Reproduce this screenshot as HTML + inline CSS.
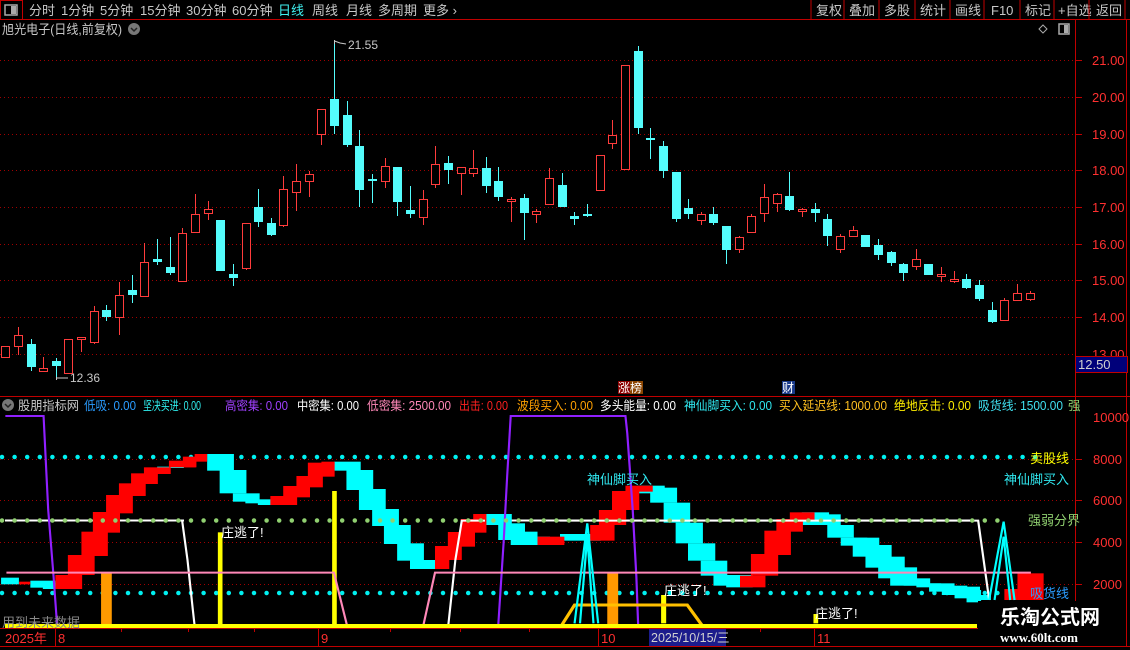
<!DOCTYPE html>
<html><head><meta charset="utf-8"><style>
html,body{margin:0;padding:0;background:#000;}
svg{display:block;font-family:"Liberation Sans","Noto Sans CJK SC",sans-serif;}
</style></head><body>
<svg width="1130" height="650" viewBox="0 0 1130 650" xmlns="http://www.w3.org/2000/svg">
<rect width="1130" height="650" fill="#000"/>
<g font-size="13" fill="#c8c8c8">
<rect x="0.5" y="0.5" width="22" height="19" fill="none" stroke="#c00000"/>
<rect x="5" y="5" width="12" height="10" fill="none" stroke="#aaa" stroke-width="1.5"/><rect x="11" y="6" width="5" height="8" fill="#aaa"/>
<text x="29" y="15">分时</text><text x="61" y="15">1分钟</text><text x="100" y="15">5分钟</text><text x="140" y="15">15分钟</text><text x="186" y="15">30分钟</text><text x="232" y="15">60分钟</text>
<text x="278" y="15" fill="#40f0f0">日线</text><text x="312" y="15">周线</text><text x="346" y="15">月线</text><text x="378" y="15">多周期</text><text x="423" y="15">更多 ›</text>
<text x="816" y="15">复权</text><text x="849" y="15">叠加</text><text x="884" y="15">多股</text><text x="920" y="15">统计</text><text x="955" y="15">画线</text><text x="991" y="15">F10</text><text x="1025" y="15">标记</text><text x="1058" y="15">+自选</text><text x="1096" y="15">返回</text>
</g>
<g stroke="#c00000" stroke-width="1">
<line x1="811" y1="0" x2="811" y2="19"/><line x1="844" y1="0" x2="844" y2="19"/><line x1="879" y1="0" x2="879" y2="19"/><line x1="915" y1="0" x2="915" y2="19"/><line x1="950" y1="0" x2="950" y2="19"/><line x1="984" y1="0" x2="984" y2="19"/><line x1="1020" y1="0" x2="1020" y2="19"/><line x1="1054" y1="0" x2="1054" y2="19"/><line x1="1089" y1="0" x2="1089" y2="19"/><line x1="1125" y1="0" x2="1125" y2="19"/>
<line x1="0" y1="19.5" x2="1130" y2="19.5"/>
<line x1="1075.5" y1="20" x2="1075.5" y2="646"/>
<line x1="1126.5" y1="20" x2="1126.5" y2="646"/>
<line x1="0" y1="396.5" x2="1130" y2="396.5"/>
<line x1="0" y1="628.5" x2="1075" y2="628.5"/>
<line x1="0" y1="646.5" x2="1130" y2="646.5"/>
</g>
<text x="2" y="34" font-size="13" fill="#c8c8c8" textLength="120" lengthAdjust="spacingAndGlyphs">旭光电子(日线,前复权)</text>
<circle cx="134" cy="29" r="6" fill="#777"/><path d="M131 28 L134 31 L137 28" stroke="#222" stroke-width="1.5" fill="none"/>
<path d="M1043 25 L1047 29 L1043 33 L1039 29 Z" fill="none" stroke="#aaa"/>
<rect x="1059" y="24" width="10" height="10" fill="none" stroke="#aaa" stroke-width="1.5"/><rect x="1064" y="25" width="4" height="8" fill="#aaa"/>
<g stroke="#a00000" stroke-width="1" stroke-dasharray="1 3">
<line x1="0" y1="60.5" x2="1075" y2="60.5"/><line x1="0" y1="97.5" x2="1075" y2="97.5"/><line x1="0" y1="134.5" x2="1075" y2="134.5"/><line x1="0" y1="170.5" x2="1075" y2="170.5"/><line x1="0" y1="207.5" x2="1075" y2="207.5"/><line x1="0" y1="244.5" x2="1075" y2="244.5"/><line x1="0" y1="280.5" x2="1075" y2="280.5"/><line x1="0" y1="317.5" x2="1075" y2="317.5"/><line x1="0" y1="354.5" x2="1075" y2="354.5"/>
<line x1="0" y1="459.5" x2="1075" y2="459.5"/><line x1="0" y1="500.5" x2="1075" y2="500.5"/><line x1="0" y1="542.5" x2="1075" y2="542.5"/><line x1="0" y1="584.5" x2="1075" y2="584.5"/>
</g>
<g font-size="13" fill="#ff3030">
<text x="1092" y="65">21.00</text><text x="1092" y="102">20.00</text><text x="1092" y="139">19.00</text><text x="1092" y="175">18.00</text><text x="1092" y="212">17.00</text><text x="1092" y="249">16.00</text><text x="1092" y="285">15.00</text><text x="1092" y="322">14.00</text><text x="1092" y="359">13.00</text>
<text x="1093" y="422">10000</text><text x="1093" y="464">8000</text><text x="1093" y="505">6000</text><text x="1093" y="547">4000</text><text x="1093" y="589">2000</text>
</g>
<g stroke="#c00000"><line x1="1076" y1="60.5" x2="1082" y2="60.5"/><line x1="1076" y1="97.5" x2="1082" y2="97.5"/><line x1="1076" y1="134.5" x2="1082" y2="134.5"/><line x1="1076" y1="170.5" x2="1082" y2="170.5"/><line x1="1076" y1="207.5" x2="1082" y2="207.5"/><line x1="1076" y1="244.5" x2="1082" y2="244.5"/><line x1="1076" y1="280.5" x2="1082" y2="280.5"/><line x1="1076" y1="317.5" x2="1082" y2="317.5"/><line x1="1076" y1="459.5" x2="1082" y2="459.5"/><line x1="1076" y1="500.5" x2="1082" y2="500.5"/><line x1="1076" y1="542.5" x2="1082" y2="542.5"/><line x1="1076" y1="584.5" x2="1082" y2="584.5"/></g>
<rect x="1075.5" y="356.5" width="52" height="16" fill="#00007a" stroke="#c00000"/>
<text x="1078" y="369" font-size="13" fill="#d0d0d0">12.50</text>
<g stroke-width="1">
<g stroke="#ff3c3c" fill="#000">
<line x1="18.5" y1="327" x2="18.5" y2="355"/><line x1="43.5" y1="357" x2="43.5" y2="371"/><line x1="81.5" y1="337" x2="81.5" y2="352"/><line x1="94.5" y1="306" x2="94.5" y2="344"/><line x1="119.5" y1="282" x2="119.5" y2="335"/><line x1="144.5" y1="243" x2="144.5" y2="297"/><line x1="182.5" y1="228" x2="182.5" y2="281"/><line x1="195.5" y1="194" x2="195.5" y2="233"/><line x1="208.5" y1="201" x2="208.5" y2="220"/><line x1="246.5" y1="223" x2="246.5" y2="270"/><line x1="283.5" y1="176" x2="283.5" y2="227"/><line x1="296.5" y1="164" x2="296.5" y2="211"/><line x1="309.5" y1="171" x2="309.5" y2="197"/><line x1="321.5" y1="109" x2="321.5" y2="145"/><line x1="385.5" y1="158" x2="385.5" y2="188"/><line x1="423.5" y1="190" x2="423.5" y2="225"/><line x1="435.5" y1="146" x2="435.5" y2="188"/><line x1="461.5" y1="167" x2="461.5" y2="195"/><line x1="473.5" y1="150" x2="473.5" y2="177"/><line x1="511.5" y1="197" x2="511.5" y2="222"/><line x1="536.5" y1="209" x2="536.5" y2="223"/><line x1="549.5" y1="168" x2="549.5" y2="204"/><line x1="612.5" y1="120" x2="612.5" y2="149"/><line x1="701.5" y1="212" x2="701.5" y2="225"/><line x1="739.5" y1="236" x2="739.5" y2="253"/><line x1="751.5" y1="214" x2="751.5" y2="233"/><line x1="764.5" y1="184" x2="764.5" y2="222"/><line x1="777.5" y1="193" x2="777.5" y2="212"/><line x1="802.5" y1="208" x2="802.5" y2="217"/><line x1="840.5" y1="234" x2="840.5" y2="253"/><line x1="853.5" y1="226" x2="853.5" y2="236"/><line x1="916.5" y1="249" x2="916.5" y2="270"/><line x1="941.5" y1="267" x2="941.5" y2="282"/><line x1="954.5" y1="271" x2="954.5" y2="283"/><line x1="1004.5" y1="298" x2="1004.5" y2="320"/><line x1="1017.5" y1="284" x2="1017.5" y2="300"/><line x1="1030.5" y1="291" x2="1030.5" y2="301"/>
<rect x="1.5" y="346.5" width="8" height="11"/><rect x="14.5" y="335.5" width="8" height="11"/><rect x="39.5" y="368.5" width="8" height="3"/><rect x="64.5" y="339.5" width="8" height="34"/><rect x="77.5" y="337.5" width="8" height="2"/><rect x="90.5" y="311.5" width="8" height="31"/><rect x="115.5" y="295.5" width="8" height="22"/><rect x="140.5" y="262.5" width="8" height="34"/><rect x="178.5" y="233.5" width="8" height="48"/><rect x="191.5" y="214.5" width="8" height="18"/><rect x="204.5" y="209.5" width="8" height="4"/><rect x="242.5" y="223.5" width="8" height="45"/><rect x="279.5" y="189.5" width="8" height="36"/><rect x="292.5" y="181.5" width="8" height="11"/><rect x="305.5" y="174.5" width="8" height="7"/><rect x="317.5" y="109.5" width="8" height="25"/><rect x="381.5" y="166.5" width="8" height="15"/><rect x="419.5" y="199.5" width="8" height="18"/><rect x="431.5" y="164.5" width="8" height="20"/><rect x="457.5" y="167.5" width="8" height="6"/><rect x="469.5" y="168.5" width="8" height="5"/><rect x="507.5" y="199.5" width="8" height="2"/><rect x="532.5" y="211.5" width="8" height="3"/><rect x="545.5" y="178.5" width="8" height="26"/><rect x="596.5" y="155.5" width="8" height="35"/><rect x="608.5" y="135.5" width="8" height="8"/><rect x="621.5" y="65.5" width="8" height="104"/><rect x="697.5" y="214.5" width="8" height="6"/><rect x="735.5" y="237.5" width="8" height="12"/><rect x="747.5" y="216.5" width="8" height="16"/><rect x="760.5" y="197.5" width="8" height="16"/><rect x="773.5" y="194.5" width="8" height="9"/><rect x="798.5" y="209.5" width="8" height="2"/><rect x="836.5" y="236.5" width="8" height="13"/><rect x="849.5" y="230.5" width="8" height="6"/><rect x="912.5" y="259.5" width="8" height="7"/><rect x="937.5" y="274.5" width="8" height="2"/><rect x="950.5" y="279.5" width="8" height="2"/><rect x="1000.5" y="300.5" width="8" height="20"/><rect x="1013.5" y="293.5" width="8" height="7"/><rect x="1026.5" y="293.5" width="8" height="6"/>
</g>
<g stroke="#54fcfc" fill="#54fcfc">
<line x1="31.5" y1="339" x2="31.5" y2="371"/><line x1="56.5" y1="358" x2="56.5" y2="377"/><line x1="106.5" y1="305" x2="106.5" y2="321"/><line x1="132.5" y1="275" x2="132.5" y2="303"/><line x1="157.5" y1="239" x2="157.5" y2="265"/><line x1="170.5" y1="237" x2="170.5" y2="275"/><line x1="233.5" y1="264" x2="233.5" y2="286"/><line x1="258.5" y1="189" x2="258.5" y2="227"/><line x1="271.5" y1="218" x2="271.5" y2="236"/><line x1="334.5" y1="40" x2="334.5" y2="134"/><line x1="347.5" y1="101" x2="347.5" y2="147"/><line x1="359.5" y1="130" x2="359.5" y2="207"/><line x1="372.5" y1="174" x2="372.5" y2="203"/><line x1="397.5" y1="167" x2="397.5" y2="216"/><line x1="410.5" y1="186" x2="410.5" y2="218"/><line x1="448.5" y1="156" x2="448.5" y2="184"/><line x1="486.5" y1="157" x2="486.5" y2="193"/><line x1="498.5" y1="167" x2="498.5" y2="201"/><line x1="524.5" y1="194" x2="524.5" y2="240"/><line x1="562.5" y1="173" x2="562.5" y2="207"/><line x1="574.5" y1="212" x2="574.5" y2="225"/><line x1="587.5" y1="204" x2="587.5" y2="217"/><line x1="638.5" y1="46" x2="638.5" y2="134"/><line x1="650.5" y1="128" x2="650.5" y2="159"/><line x1="663.5" y1="141" x2="663.5" y2="178"/><line x1="676.5" y1="172" x2="676.5" y2="222"/><line x1="688.5" y1="199" x2="688.5" y2="219"/><line x1="713.5" y1="207" x2="713.5" y2="225"/><line x1="726.5" y1="226" x2="726.5" y2="264"/><line x1="789.5" y1="172" x2="789.5" y2="211"/><line x1="815.5" y1="203" x2="815.5" y2="222"/><line x1="827.5" y1="214" x2="827.5" y2="246"/><line x1="878.5" y1="239" x2="878.5" y2="260"/><line x1="891.5" y1="251" x2="891.5" y2="266"/><line x1="903.5" y1="263" x2="903.5" y2="281"/><line x1="966.5" y1="274" x2="966.5" y2="289"/><line x1="979.5" y1="280" x2="979.5" y2="301"/><line x1="992.5" y1="302" x2="992.5" y2="323"/>
</g>
<g fill="#54fcfc">
<rect x="27" y="344" width="9" height="23"/><rect x="52" y="361" width="9" height="5"/><rect x="102" y="310" width="9" height="7"/><rect x="128" y="290" width="9" height="5"/><rect x="153" y="259" width="9" height="3"/><rect x="166" y="267" width="9" height="6"/><rect x="216" y="220" width="9" height="51"/><rect x="229" y="274" width="9" height="4"/><rect x="254" y="207" width="9" height="15"/><rect x="267" y="223" width="9" height="12"/><rect x="330" y="99" width="9" height="27"/><rect x="343" y="115" width="9" height="30"/><rect x="355" y="146" width="9" height="44"/><rect x="368" y="179" width="9" height="2"/><rect x="393" y="167" width="9" height="35"/><rect x="406" y="210" width="9" height="4"/><rect x="444" y="163" width="9" height="7"/><rect x="482" y="168" width="9" height="18"/><rect x="494" y="181" width="9" height="16"/><rect x="520" y="198" width="9" height="15"/><rect x="558" y="185" width="9" height="22"/><rect x="570" y="216" width="9" height="3"/><rect x="583" y="214" width="9" height="2"/><rect x="634" y="51" width="9" height="77"/><rect x="646" y="138" width="9" height="2"/><rect x="659" y="146" width="9" height="25"/><rect x="672" y="172" width="9" height="47"/><rect x="684" y="208" width="9" height="6"/><rect x="709" y="214" width="9" height="9"/><rect x="722" y="226" width="9" height="24"/><rect x="785" y="196" width="9" height="14"/><rect x="811" y="209" width="9" height="4"/><rect x="823" y="219" width="9" height="17"/><rect x="861" y="235" width="9" height="12"/><rect x="874" y="245" width="9" height="10"/><rect x="887" y="252" width="9" height="11"/><rect x="899" y="264" width="9" height="9"/><rect x="924" y="264" width="9" height="11"/><rect x="962" y="279" width="9" height="9"/><rect x="975" y="285" width="9" height="14"/><rect x="988" y="310" width="9" height="12"/>
</g>
</g>
<g stroke="#c8c8c8" fill="none"><path d="M334.5 40 L334.5 44 M334.5 41 L340 43 L346 44"/><path d="M56.5 377 L56.5 380 M56.5 378 L68 378"/></g>
<text x="348" y="49" font-size="12" fill="#c8c8c8">21.55</text>
<text x="70" y="382" font-size="12" fill="#c8c8c8">12.36</text>
<rect x="618" y="381" width="12" height="13" fill="#8b0000"/><rect x="630" y="381" width="13" height="13" fill="#8b4500"/>
<text x="618" y="392" font-size="12" fill="#fff">涨榜</text>
<rect x="782" y="381" width="13" height="13" fill="#1a3a8a"/><text x="782" y="392" font-size="12" fill="#fff">财</text>
<circle cx="8" cy="405" r="6" fill="#777"/><path d="M5 404 L8 407 L11 404" stroke="#222" stroke-width="1.5" fill="none"/>
<g font-size="12.5">
<text x="18" y="410" fill="#c8c8c8" textLength="61" lengthAdjust="spacingAndGlyphs">股朋指标网</text>
<text x="84" y="410" fill="#2a9cff" textLength="52" lengthAdjust="spacingAndGlyphs">低吸: 0.00</text>
<text x="143" y="410" fill="#30f0f0" textLength="58" lengthAdjust="spacingAndGlyphs">坚决买进: 0.00</text>
<text x="225" y="410" fill="#a040ff" textLength="63" lengthAdjust="spacingAndGlyphs">高密集: 0.00</text>
<text x="297" y="410" fill="#ffffff" textLength="62" lengthAdjust="spacingAndGlyphs">中密集: 0.00</text>
<text x="367" y="410" fill="#ff88b8" textLength="84" lengthAdjust="spacingAndGlyphs">低密集: 2500.00</text>
<text x="459" y="410" fill="#ff2020" textLength="49" lengthAdjust="spacingAndGlyphs">出击: 0.00</text>
<text x="517" y="410" fill="#ffa000" textLength="76" lengthAdjust="spacingAndGlyphs">波段买入: 0.00</text>
<text x="600" y="410" fill="#ffffff" textLength="76" lengthAdjust="spacingAndGlyphs">多头能量: 0.00</text>
<text x="684" y="410" fill="#30e8f0" textLength="88" lengthAdjust="spacingAndGlyphs">神仙脚买入: 0.00</text>
<text x="779" y="410" fill="#ffc020" textLength="108" lengthAdjust="spacingAndGlyphs">买入延迟线: 1000.00</text>
<text x="894" y="410" fill="#ffee00" textLength="77" lengthAdjust="spacingAndGlyphs">绝地反击: 0.00</text>
<text x="978" y="410" fill="#40e0f0" textLength="85" lengthAdjust="spacingAndGlyphs">吸货线: 1500.00</text>
<text x="1068" y="410" fill="#90d070">强</text>
</g>
<line x1="2" y1="457" x2="1040" y2="457" stroke="#00f0f0" stroke-width="4.5" stroke-linecap="round" stroke-dasharray="0 12.6"/>
<line x1="2" y1="593" x2="1040" y2="593" stroke="#00f0f0" stroke-width="4.5" stroke-linecap="round" stroke-dasharray="0 12.6"/>
<line x1="5" y1="520.5" x2="184" y2="520.5" stroke="#fff" stroke-width="2"/>
<line x1="462" y1="520.5" x2="971" y2="520.5" stroke="#fff" stroke-width="2"/>
<g transform="translate(0,410) scale(0.35714,0.33333)">
<g fill="#00ffff">
<rect x="3" y="503" width="50" height="20"/><rect x="85" y="512" width="70" height="21"/><rect x="120" y="518" width="75" height="19"/><rect x="440" y="170" width="75" height="4"/><rect x="580" y="132" width="75" height="50"/><rect x="615" y="180" width="75" height="70"/><rect x="652" y="250" width="75" height="25"/><rect x="687" y="268" width="73" height="12"/><rect x="722" y="270" width="75" height="15"/><rect x="935" y="155" width="75" height="27"/><rect x="970" y="180" width="75" height="60"/><rect x="1005" y="237" width="75" height="63"/><rect x="1042" y="297" width="75" height="51"/><rect x="1075" y="345" width="75" height="57"/><rect x="1112" y="400" width="75" height="52"/><rect x="1148" y="450" width="75" height="27"/><rect x="1358" y="312" width="75" height="33"/><rect x="1395" y="340" width="75" height="50"/><rect x="1430" y="365" width="75" height="40"/><rect x="1465" y="380" width="75" height="25"/>
</g>
<g fill="#ff0000">
<rect x="53" y="515" width="32" height="8"/><rect x="155" y="495" width="75" height="42"/><rect x="190" y="435" width="75" height="60"/><rect x="228" y="365" width="74" height="73"/><rect x="260" y="306" width="76" height="62"/><rect x="297" y="255" width="75" height="55"/><rect x="333" y="220" width="75" height="38"/><rect x="367" y="190" width="75" height="32"/><rect x="403" y="172" width="75" height="20"/><rect x="473" y="152" width="75" height="20"/><rect x="512" y="140" width="38" height="32"/><rect x="545" y="132" width="35" height="23"/><rect x="757" y="258" width="75" height="27"/><rect x="793" y="228" width="75" height="34"/><rect x="830" y="198" width="74" height="34"/><rect x="862" y="158" width="75" height="42"/><rect x="900" y="155" width="37" height="5"/><rect x="1218" y="408" width="40" height="69"/><rect x="1254" y="366" width="39" height="84"/><rect x="1290" y="327" width="40" height="83"/><rect x="1325" y="312" width="37" height="56"/><rect x="1505" y="380" width="63" height="25"/>
</g>
<rect x="283" y="490" width="30" height="158" fill="#ff9900"/>
<rect x="610" y="367" width="13" height="275" fill="#ffff00"/>
<rect x="930" y="243" width="13" height="399" fill="#ffff00"/>
<g fill="none" stroke-width="6">
<path d="M15 18 L122 18 L135 300 L150 500 L160 648" stroke="#9020ff"/>
<path d="M1395 648 L1410 400 L1420 200 L1430 18 L1568 18" stroke="#9020ff"/>
<path d="M510 332 L525 450 L540 600 L545 648" stroke="#fff"/>
<path d="M1255 648 L1275 450 L1293 332 L1358 332" stroke="#fff"/>
<path d="M18 488 L935 488 L972 648" stroke="#ff88b8"/>
<path d="M1185 648 L1218 488 L1568 488" stroke="#ff88b8"/>
</g>
</g>
<g transform="translate(560,410) scale(0.363636,0.33333)">
<g fill="#00ffff">
<rect x="0" y="372" width="112" height="20"/><rect x="213" y="227" width="75" height="23"/><rect x="248" y="233" width="74" height="45"/><rect x="285" y="278" width="73" height="60"/><rect x="318" y="338" width="75" height="62"/><rect x="352" y="400" width="75" height="52"/><rect x="387" y="452" width="73" height="45"/><rect x="422" y="495" width="73" height="32"/><rect x="457" y="495" width="73" height="37"/><rect x="665" y="307" width="75" height="38"/><rect x="700" y="313" width="72" height="32"/><rect x="735" y="345" width="73" height="38"/><rect x="772" y="383" width="73" height="24"/><rect x="805" y="383" width="73" height="57"/><rect x="840" y="405" width="72" height="68"/><rect x="875" y="440" width="73" height="65"/><rect x="908" y="472" width="74" height="55"/><rect x="945" y="505" width="73" height="22"/><rect x="980" y="520" width="68" height="12"/><rect x="1015" y="520" width="70" height="25"/><rect x="1050" y="527" width="70" height="28"/><rect x="1085" y="530" width="70" height="35"/><rect x="1118" y="540" width="40" height="37"/><rect x="1150" y="555" width="35" height="15"/>
</g>
<g fill="#ff0000">
<rect x="0" y="380" width="12" height="25"/><rect x="83" y="345" width="67" height="47"/><rect x="107" y="300" width="75" height="45"/><rect x="143" y="243" width="75" height="57"/><rect x="180" y="227" width="75" height="18"/><rect x="495" y="497" width="70" height="35"/><rect x="525" y="432" width="75" height="65"/><rect x="562" y="362" width="73" height="73"/><rect x="595" y="327" width="73" height="38"/><rect x="632" y="307" width="68" height="23"/><rect x="1222" y="537" width="36" height="33"/><rect x="1258" y="490" width="72" height="80"/>
</g>
<rect x="130" y="490" width="30" height="158" fill="#ff9900"/>
<rect x="278" y="555" width="14" height="85" fill="#ffff00"/>
<rect x="697" y="612" width="13" height="28" fill="#ffff00"/>
<g fill="none" stroke-width="6">
<path d="M0 18 L180 18 L185 70 L200 300 L210 500 L215 648" stroke="#9020ff"/>
<path d="M0 332 L1150 332 L1165 450 L1180 568" stroke="#fff"/>
<path d="M0 488 L1295 488" stroke="#ff88b8"/>
<path d="M5 645 L40 585 L350 585 L390 645" stroke="#ffc000" stroke-width="9"/>
<path d="M40 640 L75 340 L105 640 M55 640 L75 380 L92 640" stroke="#00ffff"/>
<path d="M1180 570 L1220 335 L1250 570 M1195 570 L1220 380 L1238 570" stroke="#00ffff"/>
</g>
</g>
<line x1="2" y1="520.5" x2="1010" y2="520.5" stroke="#90d070" stroke-width="4.5" stroke-linecap="round" stroke-dasharray="0 12.6"/>
<rect x="5" y="624" width="972" height="4" fill="#ffff00"/>
<g font-size="13">
<text x="221" y="537" fill="#fff">庄逃了!</text>
<text x="664" y="595" fill="#fff">庄逃了!</text>
<text x="815" y="618" fill="#fff">庄逃了!</text>
<text x="587" y="484" fill="#30e8f0">神仙脚买入</text>
<text x="1030" y="463" fill="#ffff00">卖股线</text>
<text x="1004" y="484" fill="#30e8f0">神仙脚买入</text>
<text x="1028" y="525" fill="#90d070">强弱分界</text>
<text x="1030" y="598" fill="#2a9cff">吸货线</text>
<text x="2" y="627" fill="#888">用到未来数据</text>
</g>
<rect x="978" y="601" width="148" height="45" fill="#000"/>
<text x="1000" y="624" font-size="20" font-weight="bold" fill="#fff">乐淘公式网</text>
<text x="1000" y="642" font-size="13" font-weight="bold" fill="#fff" font-family="Liberation Serif,serif">www.60lt.com</text>
<g stroke="#c00000"><line x1="55.5" y1="629" x2="55.5" y2="646"/><line x1="318.5" y1="629" x2="318.5" y2="646"/><line x1="598.5" y1="629" x2="598.5" y2="646"/><line x1="814.5" y1="629" x2="814.5" y2="646"/>
<line x1="121.5" y1="629" x2="121.5" y2="632"/><line x1="188.5" y1="629" x2="188.5" y2="632"/><line x1="254.5" y1="629" x2="254.5" y2="632"/><line x1="390.5" y1="629" x2="390.5" y2="632"/><line x1="460.5" y1="629" x2="460.5" y2="632"/><line x1="529.5" y1="629" x2="529.5" y2="632"/><line x1="760.5" y1="629" x2="760.5" y2="632"/></g>
<g font-size="13" fill="#ff3030">
<text x="5" y="643">2025年</text><text x="58" y="643">8</text><text x="321" y="643">9</text><text x="601" y="643">10</text><text x="817" y="643">11</text>
</g>
<rect x="649" y="629" width="77" height="17" fill="#1c1c8c"/>
<text x="651" y="642" font-size="12.5" fill="#d0d0d0">2025/10/15/三</text>
</svg>
</body></html>
